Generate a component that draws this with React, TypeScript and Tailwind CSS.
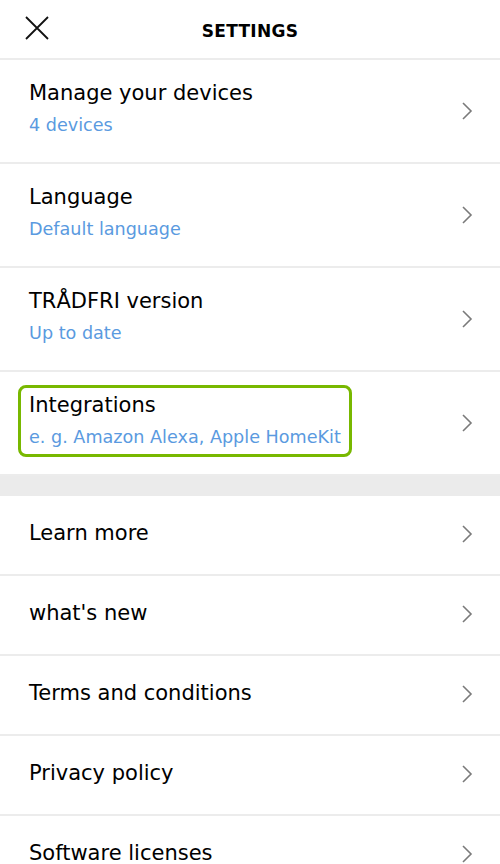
import React from 'react'

const font = { fontFamily: '"DejaVu Sans", Verdana, sans-serif' }

function Chevron() {
  return (
    <svg width="12" height="20" viewBox="0 0 12 20" className="shrink-0">
      <path d="M2 2 L10 10 L2 18" fill="none" stroke="#7a7a7a" strokeWidth="1.6" />
    </svg>
  )
}

type Item = { title: string; sub?: string; highlight?: boolean }

const top: Item[] = [
  { title: 'Manage your devices', sub: '4 devices' },
  { title: 'Language', sub: 'Default language' },
  { title: 'TRÅDFRI version', sub: 'Up to date' },
  { title: 'Integrations', sub: 'e. g. Amazon Alexa, Apple HomeKit', highlight: true },
]

const bottom: Item[] = [
  { title: 'Learn more' },
  { title: "what's new" },
  { title: 'Terms and conditions' },
  { title: 'Privacy policy' },
  { title: 'Software licenses' },
]

function Row({ item }: { item: Item }) {
  if (!item.sub) {
    return (
      <div className="flex items-center justify-between h-[80px] pl-[29px] pr-[27px] pb-[2px] border-b-2 border-[#ececec]">
        <span className="text-[21px] text-black">{item.title}</span>
        <Chevron />
      </div>
    )
  }
  return (
    <div className="flex items-center justify-between h-[104px] pl-[18px] pr-[27px] border-b-2 border-[#ececec]">
      <div
        className={`flex flex-col mb-[4px] pl-[8px] pr-[8px] pt-[3px] pb-[3px] rounded-[8px] border-[3px] ${
          item.highlight ? 'border-[#78b800]' : 'border-transparent'
        }`}
      >
        <span className="text-[21px] leading-[28px] text-black">{item.title}</span>
        <span className="text-[17.6px] leading-[28px] mt-[4px] text-[#5a9ae0]">{item.sub}</span>
      </div>
      <Chevron />
    </div>
  )
}

export default function App() {
  return (
    <div className="w-[500px] h-[864px] overflow-hidden bg-white" style={font}>
      <div className="relative flex items-center justify-center h-[60px] pt-[5px] border-b-2 border-[#ececec]">
        <svg width="26" height="26" viewBox="0 0 26 26" className="absolute left-[24px] top-[15px]">
          <path d="M2 2 L24 24 M24 2 L2 24" stroke="#111" strokeWidth="1.8" />
        </svg>
        <span className="text-[17px] font-bold tracking-[0.3px] text-black">SETTINGS</span>
      </div>
      {top.map(i => <Row key={i.title} item={i} />)}
      <div className="h-[20px] bg-[#ebebeb]" />
      {bottom.map(i => <Row key={i.title} item={i} />)}
    </div>
  )
}
